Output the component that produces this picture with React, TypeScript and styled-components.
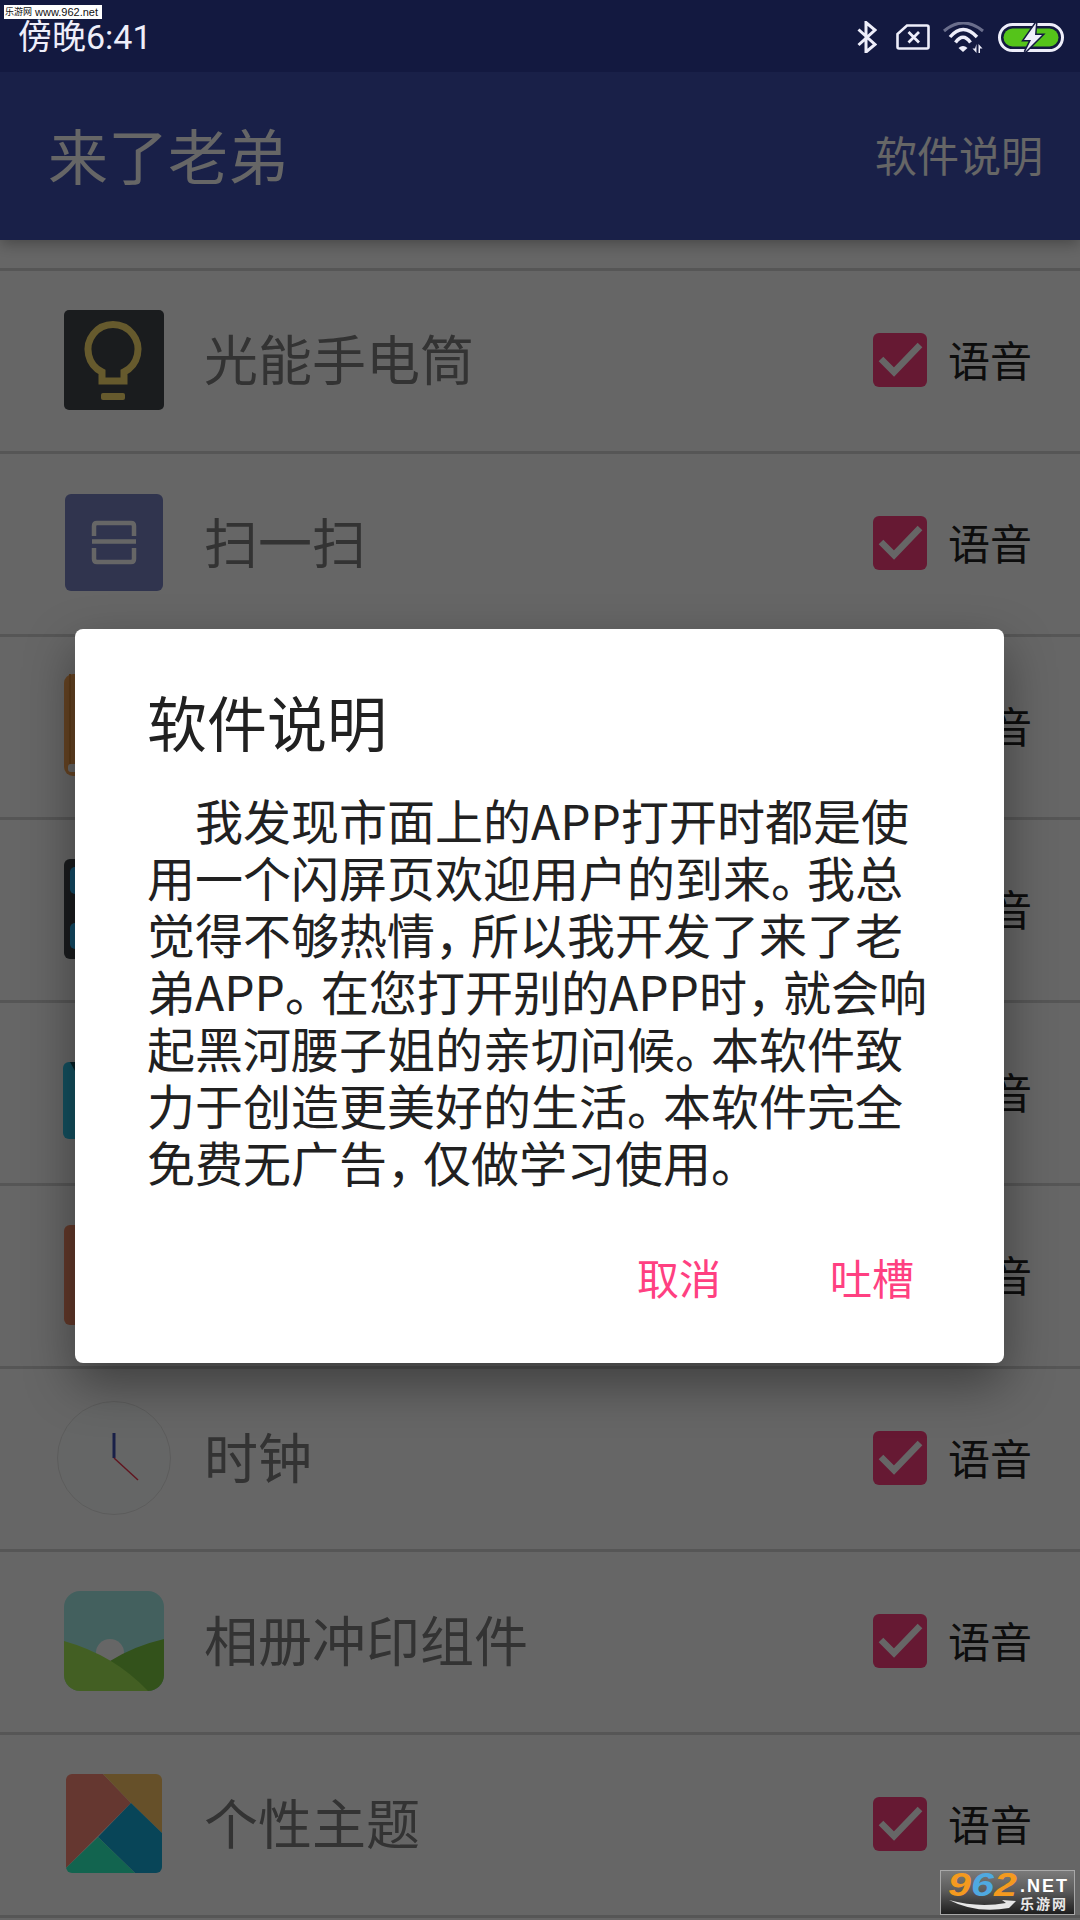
import React from 'react';
import styled, { createGlobalStyle } from 'styled-components';

// types
type AppRow = {
    name: string;
    icon: React.ReactNode;
};

// global
const GlobalStyle = createGlobalStyle`
    html, body {
        margin: 0;
        padding: 0;
        background: #ffffff;
    }
    * {
        box-sizing: border-box;
    }
`;

// local components
const Page = styled.div`
    position: relative;
    width: 1080px;
    height: 1920px;
    overflow: hidden;
    background-color: #ffffff;
    font-family: 'Noto Sans CJK SC', sans-serif;
`;

const StatusBar = styled.div`
    position: relative;
    z-index: 3;
    display: flex;
    align-items: center;
    height: 72px;
    padding: 2px 16px 0 18px;
    background-color: #131940;
`;

const StatusTime = styled.span`
    font-family: Roboto, 'Noto Sans CJK SC', sans-serif;
    font-size: 34px;
    line-height: 72px;
    color: #eeeefa;
    margin-right: auto;
`;

const StatusIcon = styled.svg<{ $gap: number }>`
    display: block;
    margin-left: ${(p) => p.$gap}px;
`;

const AppBar = styled.div`
    position: relative;
    z-index: 1;
    display: flex;
    align-items: center;
    justify-content: space-between;
    height: 168px;
    padding: 0 37px 4px 48px;
    background-color: #3f51b5;
    box-shadow: 0 4px 14px rgba(0, 0, 0, 0.3);
`;

const AppTitle = styled.div`
    font-size: 60px;
    line-height: 80px;
    color: #ffffff;
`;

const AppAction = styled.div`
    font-size: 42px;
    line-height: 60px;
    color: #ffffff;
`;

const List = styled.div`
    margin-top: 28px;
    border-top: 3px solid #d8d8d8;
`;

const Row = styled.div`
    display: flex;
    align-items: center;
    height: 183px;
    padding: 0 48px 3px 64px;
    border-bottom: 3px solid #d8d8d8;
`;

const IconSlot = styled.div`
    display: flex;
    align-items: center;
    justify-content: center;
    flex: none;
    width: 100px;
    height: 100px;
`;

const IconSvg = styled.svg`
    display: block;
    flex: none;
    overflow: visible;
`;

const RowLabel = styled.div`
    margin: 0 0 4px 40px;
    font-size: 54px;
    line-height: 70px;
    color: #808080;
`;

const RowSwitch = styled.div`
    display: flex;
    align-items: center;
    gap: 21px;
    margin-left: auto;
`;

const CheckBox = styled.div`
    width: 54px;
    height: 54px;
    border-radius: 6px;
    background-color: #ff4081;
`;

const SwitchLabel = styled.span`
    margin-bottom: 2px;
    font-size: 42px;
    line-height: 60px;
    color: #212121;
`;

const Overlay = styled.div`
    position: absolute;
    z-index: 2;
    inset: 72px 0 0 0;
    display: flex;
    align-items: center;
    justify-content: center;
    background-color: rgba(0, 0, 0, 0.6);
`;

const Dialog = styled.div`
    width: 929px;
    margin-right: 1px;
    padding: 52px 90px 56px 72px;
    border-radius: 8px;
    background-color: #ffffff;
    box-shadow: 0 20px 50px rgba(0, 0, 0, 0.4);
`;

const DialogTitle = styled.div`
    font-size: 60px;
    line-height: 80px;
    color: #212121;
`;

const DialogBody = styled.div`
    margin-top: 30px;
    font-size: 48px;
    line-height: 57px;
    color: #212121;
`;

const Line = styled.div<{ $indent?: boolean }>`
    white-space: nowrap;
    padding-left: ${(p) => (p.$indent ? 48 : 0)}px;
`;

const Punct = styled.span`
    margin-right: -0.25em;
`;

const DialogActions = styled.div`
    display: flex;
    justify-content: flex-end;
    gap: 109px;
    margin-top: 57px;
`;

const DialogButton = styled.span`
    font-size: 42px;
    line-height: 60px;
    color: #ff4081;
`;

const TopMark = styled.div`
    position: absolute;
    z-index: 4;
    top: 5px;
    left: 4px;
    display: flex;
    align-items: center;
    gap: 3px;
    width: 98px;
    height: 14px;
    padding-left: 1px;
    background-color: #ffffff;
    color: #111111;
    line-height: 14px;
    white-space: nowrap;
`;

const TopMarkName = styled.span`
    font-size: 9px;
`;

const TopMarkUrl = styled.span`
    font-family: 'Liberation Sans', sans-serif;
    font-size: 11px;
`;

const Badge = styled.div`
    position: absolute;
    z-index: 4;
    right: 5px;
    bottom: 5px;
    display: flex;
    width: 135px;
    height: 45px;
    padding: 0 0 0 7px;
    border: 1px solid #a8a8a8;
    background: linear-gradient(#7a7a7a, #5c5c5c 45%, #1e1e1e);
`;

const BadgeLeft = styled.div`
    display: flex;
    flex-direction: column;
    width: 72px;
`;

const BadgeDigits = styled.div`
    font-family: 'Liberation Sans', sans-serif;
    font-size: 33px;
    font-weight: 700;
    font-style: italic;
    line-height: 28px;
    white-space: nowrap;
    transform: scaleX(1.25);
    transform-origin: left center;
`;

const Digit = styled.span<{ $color: string }>`
    color: ${(p) => p.$color};
`;

const BadgeRight = styled.div`
    display: flex;
    flex-direction: column;
    padding-top: 6px;
    color: #ffffff;
`;

const BadgeNet = styled.div`
    font-family: 'Liberation Sans', sans-serif;
    font-size: 18px;
    font-weight: 700;
    line-height: 18px;
    letter-spacing: 2px;
    white-space: nowrap;
`;

const BadgeCn = styled.div`
    font-size: 14px;
    font-weight: 700;
    line-height: 16px;
    letter-spacing: 2px;
    white-space: nowrap;
    color: #e8e8e8;
`;

// icons
const Bulb = () => (
    <IconSvg width={100} height={100} viewBox='0 0 100 100'>
        <rect width='100' height='100' rx='5' fill='#41464b' />
        <path d='M38 62 A25 25 0 1 1 60 62 V71 H38 Z' fill='none' stroke='#ffe070' strokeWidth='7' />
        <rect x='37' y='83' width='24' height='7' rx='2' fill='#ffe070' />
    </IconSvg>
);

const Scan = () => (
    <IconSvg width={100} height={100} viewBox='0 0 100 100'>
        <rect x='1' y='1' width='98' height='97' rx='6' fill='#7882c4' />
        <g fill='none' stroke='#ffffff' strokeWidth='4.5'>
            <path d='M30 43 V33 Q30 30 33 30 H67 Q70 30 70 33 V43' />
            <path d='M28 48.5 H72' />
            <path d='M30 55 V66 Q30 69 33 69 H67 Q70 69 70 66 V55' />
        </g>
    </IconSvg>
);

const Book = () => (
    <IconSvg width={100} height={100} viewBox='0 0 100 100'>
        <rect x='0' y='-2' width='100' height='102' rx='9' fill='#ffaa58' />
        <rect x='5' y='-2' width='2' height='90' fill='#e8953f' />
        <rect x='4' y='88' width='90' height='8' rx='3' fill='#ffffff' />
    </IconSvg>
);

const Tiles = () => (
    <IconSvg width={100} height={100} viewBox='0 0 100 100'>
        <rect width='100' height='100' rx='6' fill='#41464b' />
        <rect x='6' y='8' width='88' height='27' rx='5' fill='#30bcff' />
        <rect x='6' y='64' width='88' height='26' rx='5' fill='#30bcff' />
    </IconSvg>
);

const Tealish = () => (
    <IconSvg width={100} height={100} viewBox='0 0 100 100'>
        <rect x='-1' y='20' width='100' height='77' rx='6' fill='#32c8ee' />
        <path d='M6 20 H11 V29 Z' fill='#14505f' />
    </IconSvg>
);

const Brown = () => (
    <IconSvg width={100} height={100} viewBox='0 0 100 100'>
        <rect width='100' height='100' rx='6' fill='#f88f69' />
    </IconSvg>
);

const Clock = () => (
    <IconSvg width={114} height={114} viewBox='0 0 114 114'>
        <circle cx='57' cy='57' r='56.5' fill='#fdfffe' stroke='#e6e6e6' strokeWidth='1' />
        <path d='M57 57 V32' stroke='#3f51b5' strokeWidth='3' />
        <path d='M57 57 L81 79' stroke='#f0354f' strokeWidth='1.5' />
    </IconSvg>
);

const Photo = () => (
    <IconSvg width={100} height={100} viewBox='0 0 100 100'>
        <defs>
            <clipPath id='photo-clip'>
                <rect width='100' height='100' rx='16' />
            </clipPath>
        </defs>
        <g clipPath='url(#photo-clip)'>
            <rect width='100' height='100' fill='#a8f0ec' />
            <circle cx='46' cy='62' r='14' fill='#ffffff' />
            <path d='M100 48 Q70 55 46 70 L20 100 H100 Z' fill='#7fcc44' />
            <path d='M0 50 Q50 64 84 100 H0 Z' fill='#a8ee58' />
        </g>
    </IconSvg>
);

const Theme = () => (
    <IconSvg width={100} height={100} viewBox='0 0 100 100'>
        <defs>
            <clipPath id='theme-clip'>
                <rect x='2' y='0' width='96' height='99' rx='6' />
            </clipPath>
        </defs>
        <g clipPath='url(#theme-clip)'>
            <polygon points='2,0 39,0 67,29 2,94' fill='#fc8a78' />
            <polygon points='39,0 98,0 98,59 67,29' fill='#ffc866' />
            <polygon points='67,29 98,59 98,99 71,99 34,63' fill='#14acdc' />
            <polygon points='34,63 71,99 2,99 2,94' fill='#2ffac5' />
        </g>
    </IconSvg>
);

const CheckMark = () => (
    <IconSvg width={54} height={54} viewBox='0 0 54 54'>
        <path d='M8 26 L21 39 L47 12' fill='none' stroke='#ffffff' strokeWidth='6.5' />
    </IconSvg>
);

const ICON_COLOR = '#eeeefa';

const StatusIcons = () => (
    <>
        <StatusIcon $gap={0} width={20} height={32} viewBox='0 0 20 32'>
            <path d='M1.5 8.5 L18 23.5 L9 31 V1.5 L18 9 L1.5 24' fill='none' stroke={ICON_COLOR} strokeWidth='3' />
        </StatusIcon>
        <StatusIcon $gap={19} width={34} height={26} viewBox='0 0 34 26'>
            <path
                d='M11 1.5 H31 Q32.5 1.5 32.5 3 V23 Q32.5 24.5 31 24.5 H3 Q1.5 24.5 1.5 23 V10 Z'
                fill='none'
                stroke={ICON_COLOR}
                strokeWidth='2.6'
            />
            <path d='M12.5 8 L23 18.5 M23 8 L12.5 18.5' stroke={ICON_COLOR} strokeWidth='2.8' />
        </StatusIcon>
        <StatusIcon $gap={13} width={41} height={31} viewBox='0 0 41 31'>
            <path d='M1 9 Q20 -7 40 9' fill='none' stroke='#6a6e8c' strokeWidth='3' />
            <path d='M7 15 Q20 0 34 15' fill='none' stroke={ICON_COLOR} strokeWidth='3.4' />
            <path d='M12.5 20.5 Q20 10 27.5 20.5' fill='none' stroke={ICON_COLOR} strokeWidth='3.4' />
            <path d='M15.5 26 Q20 22 24.5 26 L20 30 Z' fill={ICON_COLOR} />
            <path d='M33.5 22 V31 L29.5 26.5 H32 Z M35.5 22 L39.5 26.5 H37 V31 H35.5 Z' fill={ICON_COLOR} />
        </StatusIcon>
        <StatusIcon $gap={14} width={66} height={29} viewBox='0 0 66 29'>
            <rect x='1.5' y='1.5' width='63' height='26' rx='13' fill='none' stroke={ICON_COLOR} strokeWidth='3' />
            <rect x='5.5' y='5.5' width='55' height='18' rx='9' fill='#55c41a' />
            <path
                d='M38 0 L26 17 H33 L27 29 L44 12 H37 Z'
                fill={ICON_COLOR}
                stroke='#131940'
                strokeWidth='3'
                paintOrder='stroke'
            />
        </StatusIcon>
    </>
);

// data
const rows: AppRow[] = [
    { name: '光能手电筒', icon: <Bulb /> },
    { name: '扫一扫', icon: <Scan /> },
    { name: '', icon: <Book /> },
    { name: '', icon: <Tiles /> },
    { name: '', icon: <Tealish /> },
    { name: '', icon: <Brown /> },
    { name: '时钟', icon: <Clock /> },
    { name: '相册冲印组件', icon: <Photo /> },
    { name: '个性主题', icon: <Theme /> }
];

const bodyLines = [
    '我发现市面上的APP打开时都是使',
    '用一个闪屏页欢迎用户的到来。我总',
    '觉得不够热情，所以我开发了来了老',
    '弟APP。在您打开别的APP时，就会响',
    '起黑河腰子姐的亲切问候。本软件致',
    '力于创造更美好的生活。本软件完全',
    '免费无广告，仅做学习使用。'
];

const renderLine = (text: string) =>
    text.split(/([，。])/).map((part, i) => (i % 2 === 1 ? <Punct key={i}>{part}</Punct> : part));

// export
export default function App() {
    return (
        <Page>
            <GlobalStyle />
            <StatusBar>
                <StatusTime>傍晚6:41</StatusTime>
                <StatusIcons />
            </StatusBar>
            <TopMark>
                <TopMarkName>乐游网</TopMarkName>
                <TopMarkUrl>www.962.net</TopMarkUrl>
            </TopMark>
            <AppBar>
                <AppTitle>来了老弟</AppTitle>
                <AppAction>软件说明</AppAction>
            </AppBar>
            <List>
                {rows.map((row, i) => (
                    <Row key={i}>
                        <IconSlot>{row.icon}</IconSlot>
                        {row.name && <RowLabel>{row.name}</RowLabel>}
                        <RowSwitch>
                            <CheckBox>
                                <CheckMark />
                            </CheckBox>
                            <SwitchLabel>语音</SwitchLabel>
                        </RowSwitch>
                    </Row>
                ))}
            </List>
            <Overlay>
                <Dialog>
                    <DialogTitle>软件说明</DialogTitle>
                    <DialogBody>
                        {bodyLines.map((line, i) => (
                            <Line key={i} $indent={i === 0}>
                                {renderLine(line)}
                            </Line>
                        ))}
                    </DialogBody>
                    <DialogActions>
                        <DialogButton>取消</DialogButton>
                        <DialogButton>吐槽</DialogButton>
                    </DialogActions>
                </Dialog>
            </Overlay>
            <Badge>
                <BadgeLeft>
                    <BadgeDigits>
                        <Digit $color='#f49a1f'>9</Digit>
                        <Digit $color='#4fa9e0'>6</Digit>
                        <Digit $color='#f49a1f'>2</Digit>
                    </BadgeDigits>
                    <svg width={68} height={12} viewBox='0 0 68 12'>
                        <path d='M1 1 Q30 9 58 4 L54 1 L68 2 L61 9 Q28 15 1 1 Z' fill='#e6e6e6' />
                    </svg>
                </BadgeLeft>
                <BadgeRight>
                    <BadgeNet>.NET</BadgeNet>
                    <BadgeCn>乐游网</BadgeCn>
                </BadgeRight>
            </Badge>
        </Page>
    );
}
